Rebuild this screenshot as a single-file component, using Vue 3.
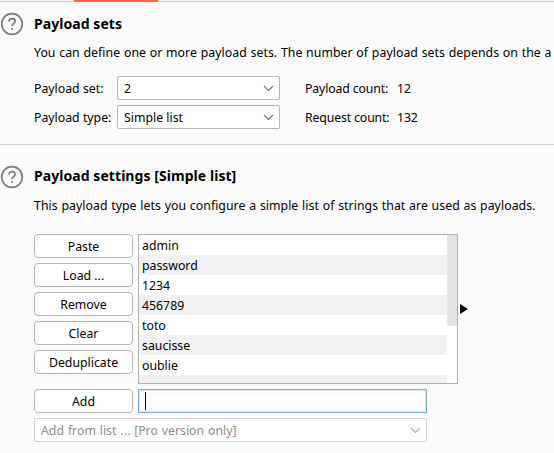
<script setup>
const buttons = ['Paste', 'Load ...', 'Remove', 'Clear', 'Deduplicate']
const payloads = ['admin', 'password', '1234', '456789', 'toto', 'saucisse', 'oublie', '']
const fields = [
  { label: 'Payload set:', value: '2', countLabel: 'Payload count:', count: '12' },
  { label: 'Payload type:', value: 'Simple list', countLabel: 'Request count:', count: '132' },
]
</script>

<template>
  <main class="panel">
    <div class="tab-line"><div class="tab-active"></div></div>

    <section class="sets">
      <svg class="help" viewBox="0 0 24 24">
        <circle cx="12" cy="12" r="10.3" />
        <path d="M9 9.4C9 7.7 10.2 6.7 12 6.7s3.1 1 3.1 2.6c0 2.2-3.1 2.3-3.1 5" />
        <path d="M12 16.1v1.8" />
      </svg>
      <div class="body">
        <h2>Payload sets</h2>
        <p>You can define one or more payload sets. The number of payload sets depends on the a</p>
        <div class="fields">
          <div v-for="f in fields" :key="f.label" class="field">
            <span class="label">{{ f.label }}</span>
            <div class="select">
              <span>{{ f.value }}</span>
              <svg class="chevron" viewBox="0 0 11 7"><path d="M1 1l4.5 4.5L10 1" /></svg>
            </div>
            <span class="count-label">{{ f.countLabel }}</span>
            <span class="count">{{ f.count }}</span>
          </div>
        </div>
      </div>
    </section>

    <section class="settings">
      <svg class="help" viewBox="0 0 24 24">
        <circle cx="12" cy="12" r="10.3" />
        <path d="M9 9.4C9 7.7 10.2 6.7 12 6.7s3.1 1 3.1 2.6c0 2.2-3.1 2.3-3.1 5" />
        <path d="M12 16.1v1.8" />
      </svg>
      <div class="body">
        <h2>Payload settings [Simple list]</h2>
        <p>This payload type lets you configure a simple list of strings that are used as payloads.</p>
        <div class="editor">
          <div class="buttons">
            <button v-for="b in buttons" :key="b">{{ b }}</button>
          </div>
          <div class="list">
            <div class="rows">
              <div v-for="(p, i) in payloads" :key="i" class="row">{{ p }}</div>
            </div>
            <div class="thumb"></div>
          </div>
          <svg class="arrow" viewBox="0 0 8 10"><path d="M0 0L8 5L0 10Z" /></svg>
        </div>
        <div class="add">
          <button>Add</button>
          <div class="input"><div class="caret"></div></div>
        </div>
        <div class="select disabled">
          <span>Add from list ... [Pro version only]</span>
          <svg class="chevron" viewBox="0 0 11 7"><path d="M1 1l4.5 4.5L10 1" /></svg>
        </div>
      </div>
    </section>
  </main>
</template>

<style>
body { margin: 0; background: #fbfbfb; overflow: hidden; }
</style>

<style scoped>
* { box-sizing: border-box; }
.panel {
  width: 554px;
  height: 453px;
  overflow: hidden;
  background: #fbfbfb;
  color: #000;
  font: 12.3px/20px "Noto Sans", "Open Sans", sans-serif;
  white-space: nowrap;
}
.tab-line { height: 2px; padding-left: 74px; background: linear-gradient(#fbfbfb 1px, #c8cbc8 1px); }
.tab-active { width: 84px; height: 2px; background: linear-gradient(#ff6633 1px, #fb6f42 1px); }
section { display: flex; align-items: flex-start; }
.help { flex: none; width: 24px; height: 24px; margin-right: 10px; fill: none; stroke: #7c7c7c; stroke-width: 1.7; }
.body { flex: none; width: 520px; }
h2 { margin: 0; font-size: 14px; line-height: 22px; font-weight: 700; letter-spacing: 0.06px; }
p { margin: 0; line-height: 20px; letter-spacing: 0.04px; word-spacing: 0.5px; }
.sets { height: 143px; padding-top: 10px; border-bottom: 1px solid #cfcfcf; }
.sets h2 { padding-top: 1px; line-height: 21px; }
.sets p { margin-top: 9px; }
.fields { display: flex; flex-direction: column; gap: 5px; margin-top: 13px; }
.field { display: flex; align-items: center; height: 24px; }
.label { width: 83px; padding-top: 2px; }
.count-label { width: 92px; margin-left: 25px; padding-top: 2px; letter-spacing: -0.14px; }
.count { padding-top: 2px; letter-spacing: -0.1px; }
.select {
  display: flex;
  align-items: center;
  justify-content: space-between;
  width: 163px;
  height: 24px;
  padding: 0 5px 0 6px;
  border: 1px solid #b9b4b4;
  border-radius: 2px;
  background: #fff;
}
.select span { padding-top: 2px; }
.chevron { width: 11px; height: 7px; fill: none; stroke: #707070; stroke-width: 1.1; }
.settings { padding-top: 20px; }
.sets .help { margin-top: 0; }
.settings p { margin-top: 9px; }
.editor { display: flex; margin-top: 18px; }
.buttons { display: flex; flex-direction: column; gap: 5px; width: 99px; margin-right: 5px; }
button {
  width: 99px;
  height: 24px;
  padding: 2px 0 0;
  border: 1px solid #b9b4b4;
  border-radius: 4px;
  background: #fff;
  color: #000;
  font: inherit;
  line-height: 20px;
}
.list { display: flex; width: 320px; height: 150px; overflow: hidden; border: 1px solid #b3b0b0; background: #fff; }
.rows { width: 308px; }
.row { height: 20px; padding: 1px 0 0 3px; line-height: 20px; }
.row:nth-child(even) { background: #f1f1f1; }
.thumb { width: 10px; height: 91px; background: #e4e4e4; }
.arrow { width: 8px; height: 10px; margin: 70px 0 0 2px; fill: #000; }
.add { display: flex; gap: 5px; margin: 5px 0; }
.input { width: 289px; height: 24px; padding: 2px 0 0 6px; border: 1px solid #7faadb; box-shadow: inset 0 0 0 1px #d5e6f8; background: #fff; }
.caret { width: 1px; height: 18px; background: #000; }
.disabled { width: 393px; border-color: #d0cece; color: #8c8c8c; word-spacing: 0.7px; }
.disabled .chevron { stroke: #aaa; }
</style>
